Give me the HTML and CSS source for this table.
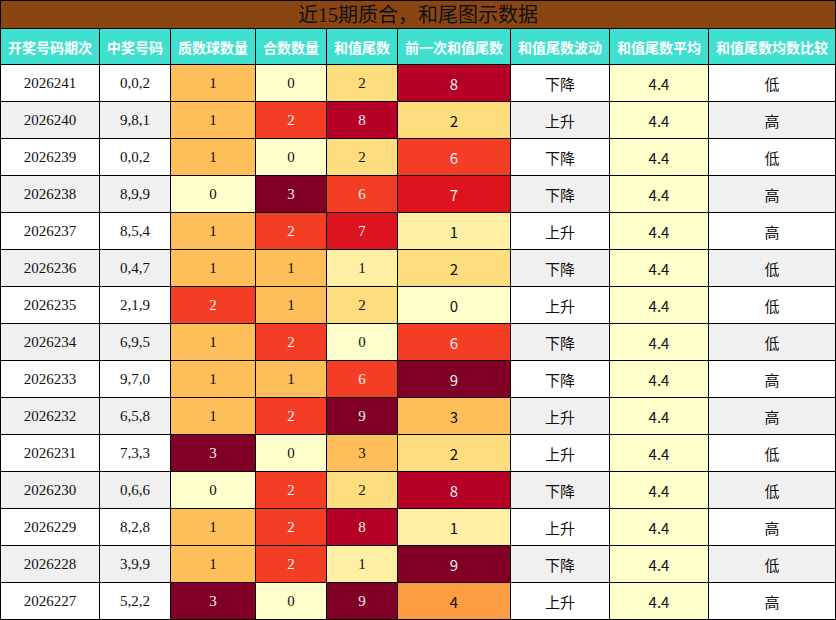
FILE: index.html
```html
<!DOCTYPE html>
<html lang="zh">
<head>
<meta charset="utf-8">
<title>近15期质合，和尾图示数据</title>
<link rel="stylesheet" href="styles.css">
</head>
<body>
<div class="sheet">
  <div class="title">近15期质合，和尾图示数据</div>

  <div class="th">开奖号码期次</div><div class="th">中奖号码</div><div class="th">质数球数量</div><div class="th">合数数量</div><div class="th">和值尾数</div><div class="th">前一次和值尾数</div><div class="th">和值尾数波动</div><div class="th">和值尾数平均</div><div class="th">和值尾数均数比较</div>

  <div class="td serif">2026241</div><div class="td serif">0,0,2</div><div class="td serif y3">1</div><div class="td serif y0">0</div><div class="td serif y2">2</div><div class="td sans y8">8</div><div class="td sans">下降</div><div class="td sans y0">4.4</div><div class="td sans">低</div>
  <div class="td serif alt">2026240</div><div class="td serif alt">9,8,1</div><div class="td serif y3">1</div><div class="td serif y6">2</div><div class="td serif y8">8</div><div class="td sans y2">2</div><div class="td sans alt">上升</div><div class="td sans y0">4.4</div><div class="td sans alt">高</div>
  <div class="td serif">2026239</div><div class="td serif">0,0,2</div><div class="td serif y3">1</div><div class="td serif y0">0</div><div class="td serif y2">2</div><div class="td sans y6">6</div><div class="td sans">下降</div><div class="td sans y0">4.4</div><div class="td sans">低</div>
  <div class="td serif alt">2026238</div><div class="td serif alt">8,9,9</div><div class="td serif y0">0</div><div class="td serif y9">3</div><div class="td serif y6">6</div><div class="td sans y7">7</div><div class="td sans alt">下降</div><div class="td sans y0">4.4</div><div class="td sans alt">高</div>
  <div class="td serif">2026237</div><div class="td serif">8,5,4</div><div class="td serif y3">1</div><div class="td serif y6">2</div><div class="td serif y7">7</div><div class="td sans y1">1</div><div class="td sans">上升</div><div class="td sans y0">4.4</div><div class="td sans">高</div>
  <div class="td serif alt">2026236</div><div class="td serif alt">0,4,7</div><div class="td serif y3">1</div><div class="td serif y3">1</div><div class="td serif y1">1</div><div class="td sans y2">2</div><div class="td sans alt">下降</div><div class="td sans y0">4.4</div><div class="td sans alt">低</div>
  <div class="td serif">2026235</div><div class="td serif">2,1,9</div><div class="td serif y6">2</div><div class="td serif y3">1</div><div class="td serif y2">2</div><div class="td sans y0">0</div><div class="td sans">上升</div><div class="td sans y0">4.4</div><div class="td sans">低</div>
  <div class="td serif alt">2026234</div><div class="td serif alt">6,9,5</div><div class="td serif y3">1</div><div class="td serif y6">2</div><div class="td serif y0">0</div><div class="td sans y6">6</div><div class="td sans alt">下降</div><div class="td sans y0">4.4</div><div class="td sans alt">低</div>
  <div class="td serif">2026233</div><div class="td serif">9,7,0</div><div class="td serif y3">1</div><div class="td serif y3">1</div><div class="td serif y6">6</div><div class="td sans y9">9</div><div class="td sans">下降</div><div class="td sans y0">4.4</div><div class="td sans">高</div>
  <div class="td serif alt">2026232</div><div class="td serif alt">6,5,8</div><div class="td serif y3">1</div><div class="td serif y6">2</div><div class="td serif y9">9</div><div class="td sans y3">3</div><div class="td sans alt">上升</div><div class="td sans y0">4.4</div><div class="td sans alt">高</div>
  <div class="td serif">2026231</div><div class="td serif">7,3,3</div><div class="td serif y9">3</div><div class="td serif y0">0</div><div class="td serif y3">3</div><div class="td sans y2">2</div><div class="td sans">上升</div><div class="td sans y0">4.4</div><div class="td sans">低</div>
  <div class="td serif alt">2026230</div><div class="td serif alt">0,6,6</div><div class="td serif y0">0</div><div class="td serif y6">2</div><div class="td serif y2">2</div><div class="td sans y8">8</div><div class="td sans alt">下降</div><div class="td sans y0">4.4</div><div class="td sans alt">低</div>
  <div class="td serif">2026229</div><div class="td serif">8,2,8</div><div class="td serif y3">1</div><div class="td serif y6">2</div><div class="td serif y8">8</div><div class="td sans y1">1</div><div class="td sans">上升</div><div class="td sans y0">4.4</div><div class="td sans">高</div>
  <div class="td serif alt">2026228</div><div class="td serif alt">3,9,9</div><div class="td serif y3">1</div><div class="td serif y6">2</div><div class="td serif y1">1</div><div class="td sans y9">9</div><div class="td sans alt">下降</div><div class="td sans y0">4.4</div><div class="td sans alt">低</div>
  <div class="td serif">2026227</div><div class="td serif">5,2,2</div><div class="td serif y9">3</div><div class="td serif y0">0</div><div class="td serif y9">9</div><div class="td sans y4">4</div><div class="td sans">上升</div><div class="td sans y0">4.4</div><div class="td sans">高</div>
</div>
</body>
</html>
```

FILE: styles.css
```css
html, body {
  margin: 0;
  padding: 0;
  background: #ffffff;
}

.sheet {
  width: 836px;
  height: 620px;
  box-sizing: border-box;
  padding: 1px;
  background: #000000;
  display: grid;
  grid-template-columns: 98px 70px 84px 70px 70px 112px 98px 98px 126px;
  grid-template-rows: 27px 35px repeat(15, 36px);
  gap: 1px;
}

.title {
  grid-column: 1 / -1;
  background: #8b4513;
  color: #111111;
  font-family: "Liberation Serif", "Noto Sans CJK SC", serif;
  font-size: 20px;
  display: flex;
  align-items: center;
  justify-content: center;
  line-height: 1;
}

.th {
  background: #40e0d0;
  color: #ffffff;
  font-family: "Noto Sans CJK SC", sans-serif;
  font-weight: bold;
  font-size: 14px;
  display: flex;
  align-items: center;
  justify-content: center;
  white-space: nowrap;
}

.td {
  background: #ffffff;
  color: #111111;
  font-size: 15px;
  display: flex;
  align-items: center;
  justify-content: center;
  white-space: nowrap;
}

.td.alt {
  background: #f0f0f0;
}

.serif {
  font-family: "Liberation Serif", "Noto Sans CJK SC", serif;
}

.sans {
  font-family: "Noto Sans CJK SC", sans-serif;
}

/* YlOrRd heat levels */
.td.y0 { background: #ffffcc; color: #111111; }
.td.y1 { background: #ffefa5; color: #111111; }
.td.y2 { background: #fedd7f; color: #111111; }
.td.y3 { background: #febf5a; color: #111111; }
.td.y4 { background: #fd9d43; color: #111111; }
.td.y6 { background: #f43d25; color: #f1f1f1; }
.td.y7 { background: #db141e; color: #f1f1f1; }
.td.y8 { background: #b60026; color: #f1f1f1; }
.td.y9 { background: #800026; color: #f1f1f1; }
```
